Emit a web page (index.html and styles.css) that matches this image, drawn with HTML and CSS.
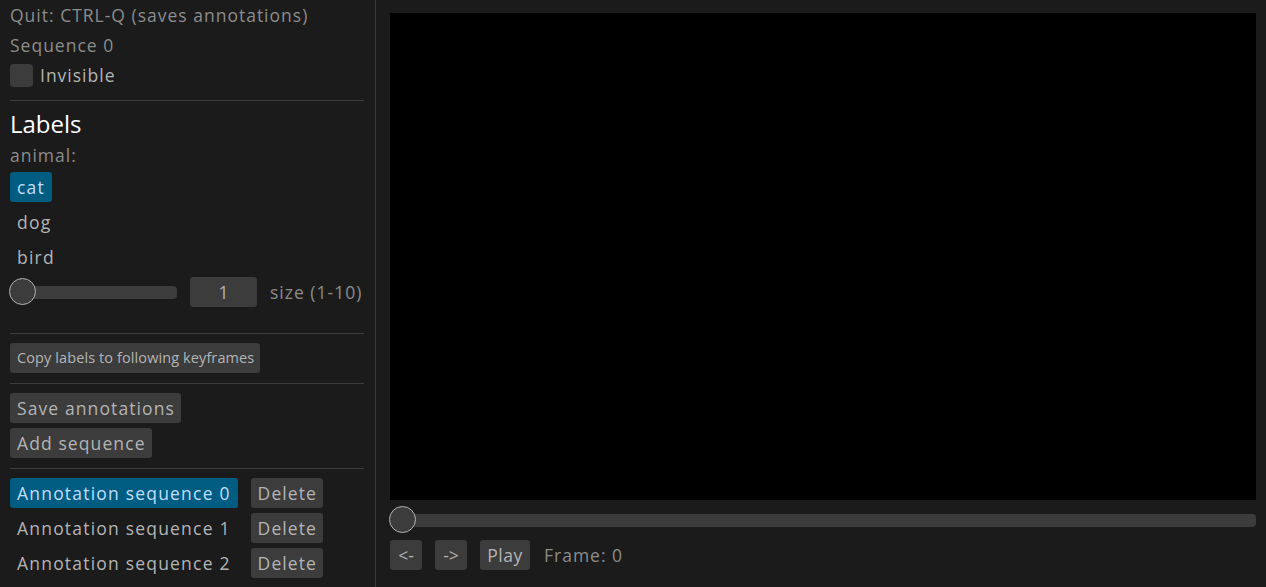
FILE: index.html
```html
<!DOCTYPE html>
<html>
<head>
<meta charset="utf-8">
<link rel="stylesheet" href="styles.css">
</head>
<body>
<div class="app">
  <aside class="side">
    <div class="line">Quit: CTRL-Q (saves annotations)</div>
    <div class="line">Sequence 0</div>
    <div class="check-row"><span class="checkbox"></span><span>Invisible</span></div>
    <div class="sep sep-1"></div>
    <h2 class="heading">Labels</h2>
    <div class="line line-animal">animal:</div>
    <div class="labels">
      <span class="sel active">cat</span>
      <span class="sel">dog</span>
      <span class="sel">bird</span>
    </div>
    <div class="slider-row">
      <div class="slider slider-small"><div class="rail"></div><div class="knob"></div></div>
      <div class="drag">1</div>
      <span class="slider-label">size (1-10)</span>
    </div>
    <div class="sep sep-2"></div>
    <button class="btn btn-small btn-copy">Copy labels to following keyframes</button>
    <div class="sep sep-3"></div>
    <button class="btn btn-save">Save annotations</button>
    <button class="btn btn-add">Add sequence</button>
    <div class="sep sep-4"></div>
    <div class="seq-grid">
      <span class="sel active">Annotation sequence 0</span><button class="btn">Delete</button>
      <span class="sel">Annotation sequence 1</span><button class="btn">Delete</button>
      <span class="sel">Annotation sequence 2</span><button class="btn">Delete</button>
    </div>
  </aside>
  <main class="main">
    <div class="canvas"></div>
    <div class="slider slider-time"><div class="rail"></div><div class="knob"></div></div>
    <div class="controls">
      <button class="btn btn-nav">&lt;-</button>
      <button class="btn btn-nav">-&gt;</button>
      <button class="btn btn-play">Play</button>
      <span class="frame">Frame: 0</span>
    </div>
  </main>
</div>
</body>
</html>
```

FILE: styles.css
```css
html, body {
  margin: 0;
  padding: 0;
  background: #1b1b1b;
  overflow: hidden;
}
body {
  font-family: "Open Sans", "Noto Sans", sans-serif;
  font-size: 17.5px;
  letter-spacing: 1px;
  color: #8c8c8c;
}
.app {
  display: flex;
  width: 1266px;
  height: 587px;
}
.side {
  width: 365px;
  padding-left: 10px;
  border-right: 1px solid #3c3c3c;
  display: flex;
  flex-direction: column;
  align-items: flex-start;
  flex: none;
}
.line {
  height: 30px;
  line-height: 30px;
  white-space: nowrap;
}
.check-row {
  display: flex;
  align-items: center;
  gap: 7px;
  height: 30px;
  color: #b4b4b4;
}
.checkbox {
  width: 23px;
  height: 23px;
  border-radius: 4px;
  background: #3c3c3c;
}
.sep {
  width: 354px;
  height: 1px;
  background: #3c3c3c;
}
.sep-1 { margin-top: 10px; }
.sep-2 { margin-top: 26px; }
.sep-3 { margin-top: 10px; }
.sep-4 { margin-top: 10px; }
.heading {
  margin: 8px 0 0;
  height: 30px;
  line-height: 30px;
  font-size: 24px;
  letter-spacing: 0;
  font-weight: normal;
  color: #ffffff;
}
.line-animal { margin-top: 1px; }
.labels {
  display: flex;
  flex-direction: column;
  align-items: flex-start;
  gap: 5px;
  margin-top: 2px;
}
.sel {
  height: 30px;
  line-height: 30px;
  padding: 0 7px;
  border-radius: 3px;
  color: #b4b4b4;
  letter-spacing: 1.2px;
  white-space: nowrap;
}
.sel.active {
  background: #005c80;
  color: #c0deff;
}
.slider-row {
  display: flex;
  align-items: center;
  gap: 13px;
  height: 30px;
  margin-top: 5px;
}
.slider {
  position: relative;
  height: 30px;
  display: flex;
  align-items: center;
}
.slider-small { width: 167px; }
.rail {
  width: 100%;
  height: 13px;
  border-radius: 4px;
  background: #3c3c3c;
}
.knob {
  position: absolute;
  left: -1px;
  top: 1px;
  width: 25px;
  height: 25px;
  border-radius: 50%;
  background: #3c3c3c;
  border: 1.5px solid #b4b4b4;
}
.drag {
  width: 67px;
  height: 30px;
  line-height: 30px;
  text-align: center;
  border-radius: 3px;
  background: #3c3c3c;
  color: #b4b4b4;
  letter-spacing: 0;
}
.slider-label { white-space: nowrap; }
.btn {
  font-family: inherit;
  font-size: 17.5px;
  letter-spacing: 1.1px;
  height: 30px;
  line-height: 30px;
  padding: 0 6px 0 7px;
  border: 0;
  border-radius: 3px;
  background: #3c3c3c;
  color: #b4b4b4;
  white-space: nowrap;
  flex: none;
}
.btn-small { font-size: 14.5px; letter-spacing: 0.1px; }
.btn-copy { margin-top: 9px; }
.btn-save { margin-top: 9px; }
.btn-add { margin-top: 5px; }
.seq-grid {
  margin-top: 9px;
  display: grid;
  grid-template-columns: auto auto;
  column-gap: 13px;
  row-gap: 5px;
  justify-items: start;
}
.main {
  flex: 1;
  padding: 13px 10px 0 14px;
  display: flex;
  flex-direction: column;
}
.canvas {
  height: 487px;
  background: #000000;
}
.slider-time {
  margin-top: 5px;
  width: 100%;
}
.controls {
  margin-top: 5px;
  display: flex;
  align-items: center;
  gap: 13px;
  height: 30px;
}
.btn-nav { width: 32px; padding: 0; letter-spacing: 0; }
.btn-play { width: 50px; padding: 0; letter-spacing: 0.5px; }
.frame { margin-left: 1px; white-space: nowrap; }
```
